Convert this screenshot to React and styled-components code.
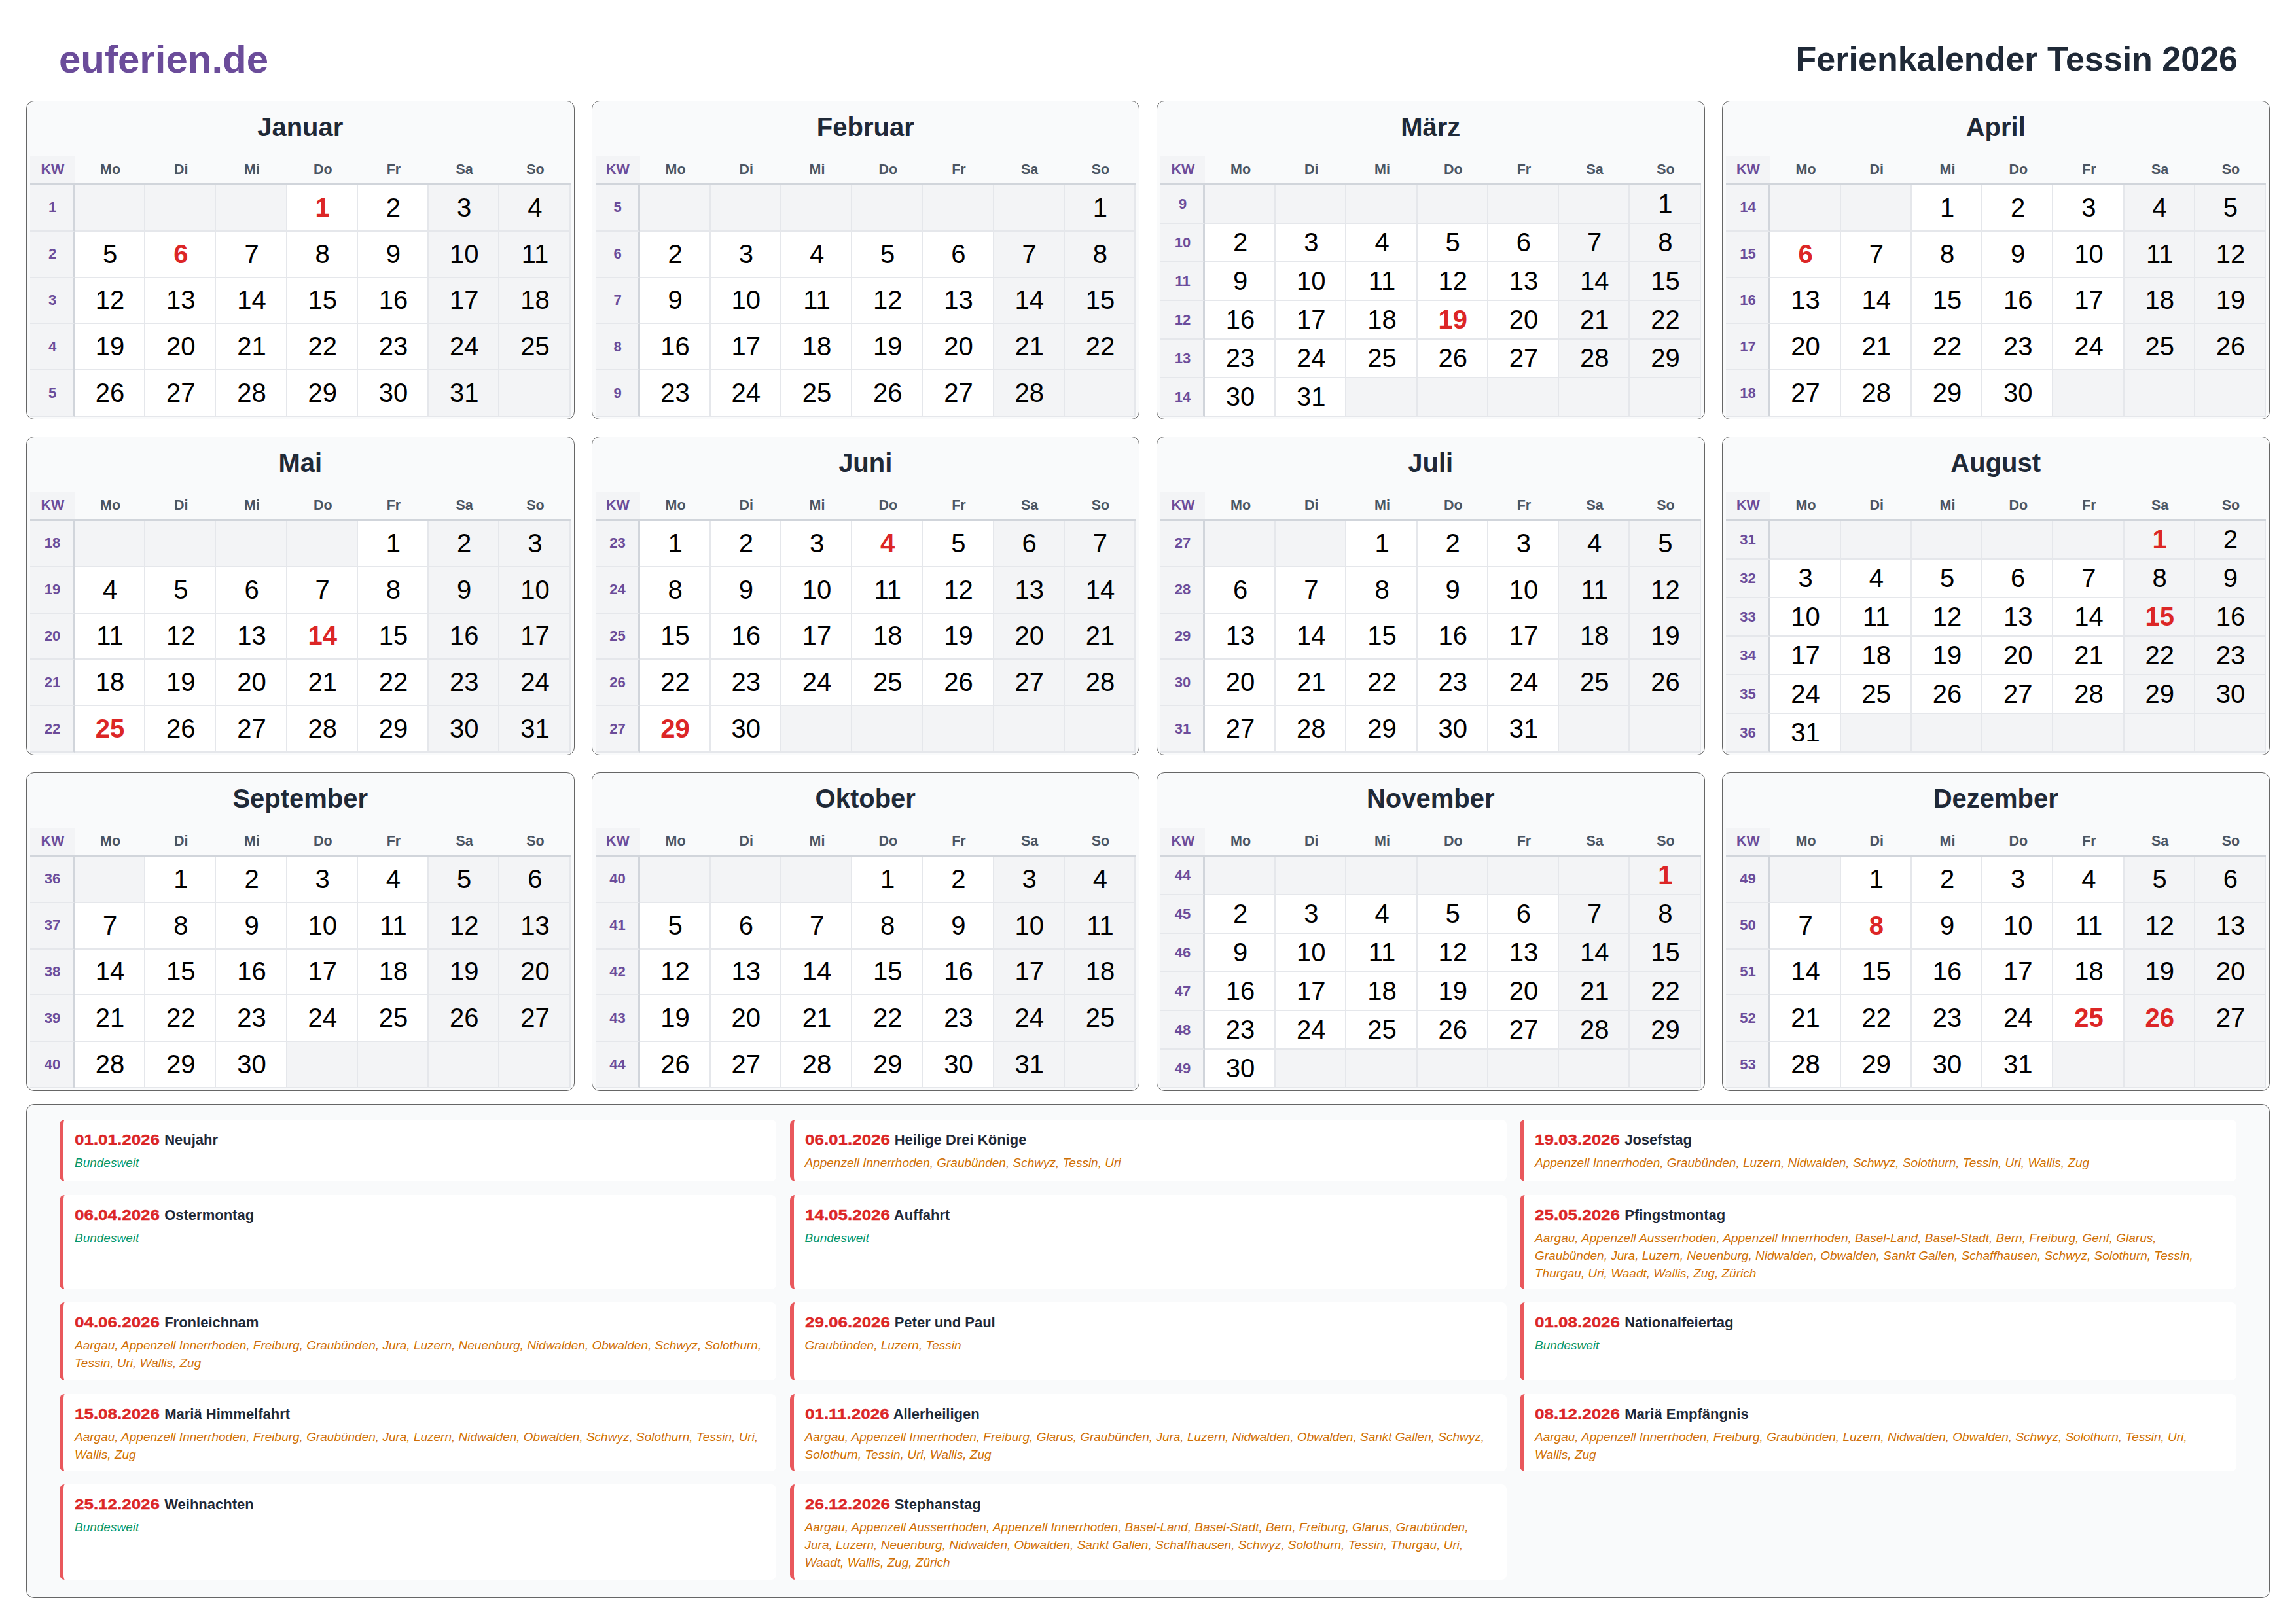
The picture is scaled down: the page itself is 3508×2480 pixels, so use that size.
import React from 'react';
import styled, { createGlobalStyle } from 'styled-components';

const GlobalStyle = createGlobalStyle`
  html, body {
    margin: 0;
    padding: 0;
    background: #fff;
    font-family: "Liberation Sans", Arial, sans-serif;
  }
`

const Page = styled.div`
  width: 3508px;
  height: 2480px;
  box-sizing: border-box;
  padding: 0 40px;
`
const Header = styled.header`
  height: 154px;
  box-sizing: border-box;
  padding: 26px 49px 0 50px;
  display: flex;
  align-items: center;
  justify-content: space-between;
`
const Brand = styled.div`
  font-size: 60px;
  font-weight: bold;
  color: #6b4c9a;
`
const PageTitle = styled.h1`
  margin: 0;
  font-size: 52px;
  font-weight: bold;
  color: #1f2937;
`
const Months = styled.div`
  display: grid;
  grid-template-columns: repeat(4, 1fr);
  grid-auto-rows: 487px;
  gap: 26px;
`
const Card = styled.section`
  box-sizing: border-box;
  border: 1px solid #666;
  border-radius: 12px;
  background: #f9fafb;
  padding: 0 5px 3px;
  display: flex;
  flex-direction: column;
`
const MonthName = styled.h2`
  margin: 0;
  height: 84px;
  line-height: 78px;
  text-align: center;
  font-size: 40px;
  font-weight: bold;
  color: #1f2937;
`
const Grid = styled.div`
  flex: 1;
  display: grid;
  grid-template-columns: 68px repeat(7, 1fr);
  grid-template-rows: 44px repeat(${p => p.$rows}, 1fr);
`
const HeadCell = styled.div`
  display: flex;
  align-items: center;
  justify-content: center;
  padding-left: 1px;
  border-bottom: 3px solid #d1d5db;
  font-size: 21.5px;
  font-weight: bold;
  color: #4b5563;
`
const KwHead = styled(HeadCell)`
  background: #f3f4f6;
  color: #6b4c9a;
`
const KwCell = styled.div`
  display: flex;
  align-items: center;
  justify-content: center;
  padding-left: 3px;
  background: #f3f4f6;
  border-right: 3px solid #d1d5db;
  border-bottom: 2px solid #e5e7eb;
  font-size: 22px;
  font-weight: bold;
  color: #6b4c9a;
`
const DayCell = styled.div`
  display: flex;
  align-items: center;
  justify-content: center;
  padding-left: 2px;
  background: ${p => (p.$muted ? '#f3f4f6' : '#fff')};
  border-right: 2px solid #e5e7eb;
  border-bottom: 2px solid #e5e7eb;
  font-size: 40px;
  font-weight: ${p => (p.$holiday ? 'bold' : 'normal')};
  color: ${p => (p.$holiday ? '#dc2626' : '#000')};
`
const Panel = styled.section`
  margin-top: 20px;
  height: 755px;
  box-sizing: border-box;
  border: 1px solid #666;
  border-radius: 12px;
  background: #f9fafb;
  padding: 23px 49px 23px 50px;
  display: grid;
  grid-template-columns: repeat(3, 1095px);
  grid-template-rows: 94px 144px 119px 118px 146px;
  gap: 20.5px;
`
const Item = styled.div`
  box-sizing: border-box;
  background: #fff;
  border-left: 6px solid #e9585c;
  border-radius: 8px;
  padding: 15px 17px;
`
const ItemTitle = styled.div`
  font-size: 22px;
  font-weight: bold;
  line-height: 32px;
  color: #1f2937;
`
const ItemDate = styled.span`
  display: inline-block;
  margin-right: 25px;
  font-size: 21.2px;
  color: #dc2626;
  transform: scaleX(1.226);
  transform-origin: left center;
  -webkit-text-stroke: 0.4px #dc2626;
`
const Regions = styled.div`
  margin-top: 5px;
  font-size: 19px;
  font-style: italic;
  line-height: 27px;
  color: ${p => (p.$all ? '#059669' : '#cf7005')};
`

const MONTHS = ['Januar', 'Februar', 'März', 'April', 'Mai', 'Juni', 'Juli', 'August', 'September', 'Oktober', 'November', 'Dezember']
const DAYS = ['Mo', 'Di', 'Mi', 'Do', 'Fr', 'Sa', 'So']

const ALL = 'Bundesweit'
const HOLIDAYS = [
  ['01.01.2026', 'Neujahr', ALL],
  ['06.01.2026', 'Heilige Drei Könige', 'Appenzell Innerrhoden, Graubünden, Schwyz, Tessin, Uri'],
  ['19.03.2026', 'Josefstag', 'Appenzell Innerrhoden, Graubünden, Luzern, Nidwalden, Schwyz, Solothurn, Tessin, Uri, Wallis, Zug'],
  ['06.04.2026', 'Ostermontag', ALL],
  ['14.05.2026', 'Auffahrt', ALL],
  ['25.05.2026', 'Pfingstmontag', 'Aargau, Appenzell Ausserrhoden, Appenzell Innerrhoden, Basel-Land, Basel-Stadt, Bern, Freiburg, Genf, Glarus, Graubünden, Jura, Luzern, Neuenburg, Nidwalden, Obwalden, Sankt Gallen, Schaffhausen, Schwyz, Solothurn, Tessin, Thurgau, Uri, Waadt, Wallis, Zug, Zürich'],
  ['04.06.2026', 'Fronleichnam', 'Aargau, Appenzell Innerrhoden, Freiburg, Graubünden, Jura, Luzern, Neuenburg, Nidwalden, Obwalden, Schwyz, Solothurn, Tessin, Uri, Wallis, Zug'],
  ['29.06.2026', 'Peter und Paul', 'Graubünden, Luzern, Tessin'],
  ['01.08.2026', 'Nationalfeiertag', ALL],
  ['15.08.2026', 'Mariä Himmelfahrt', 'Aargau, Appenzell Innerrhoden, Freiburg, Graubünden, Jura, Luzern, Nidwalden, Obwalden, Schwyz, Solothurn, Tessin, Uri, Wallis, Zug'],
  ['01.11.2026', 'Allerheiligen', 'Aargau, Appenzell Innerrhoden, Freiburg, Glarus, Graubünden, Jura, Luzern, Nidwalden, Obwalden, Sankt Gallen, Schwyz, Solothurn, Tessin, Uri, Wallis, Zug'],
  ['08.12.2026', 'Mariä Empfängnis', 'Aargau, Appenzell Innerrhoden, Freiburg, Graubünden, Luzern, Nidwalden, Obwalden, Schwyz, Solothurn, Tessin, Uri, Wallis, Zug'],
  ['25.12.2026', 'Weihnachten', ALL],
  ['26.12.2026', 'Stephanstag', 'Aargau, Appenzell Ausserrhoden, Appenzell Innerrhoden, Basel-Land, Basel-Stadt, Bern, Freiburg, Glarus, Graubünden, Jura, Luzern, Neuenburg, Nidwalden, Obwalden, Sankt Gallen, Schaffhausen, Schwyz, Solothurn, Tessin, Thurgau, Uri, Waadt, Wallis, Zug, Zürich'],
]

const isoWeek = (year, month, day) => {
  const d = new Date(Date.UTC(year, month, day))
  const wd = d.getUTCDay() || 7
  d.setUTCDate(d.getUTCDate() + 4 - wd)
  const start = Date.UTC(d.getUTCFullYear(), 0, 1)
  return Math.ceil(((d - start) / 86400000 + 1) / 7)
}

// weeks of a month as rows of seven, null where the day is in another month
const buildWeeks = (month) => {
  const count = new Date(Date.UTC(2026, month + 1, 0)).getUTCDate()
  const offset = (new Date(Date.UTC(2026, month, 1)).getUTCDay() + 6) % 7
  const cells = Array(offset).fill(null)
  for (let d = 1; d <= count; d++) cells.push(d)
  while (cells.length % 7) cells.push(null)
  const weeks = []
  for (let i = 0; i < cells.length; i += 7) weeks.push(cells.slice(i, i + 7))
  return weeks
}

const isHoliday = (month, day) => {
  const key = `${String(day).padStart(2, '0')}.${String(month + 1).padStart(2, '0')}.2026`
  return HOLIDAYS.some(h => h[0] === key)
}

const Month = ({ month }) => {
  const weeks = buildWeeks(month)
  return (
    <Card>
      <MonthName>{MONTHS[month]}</MonthName>
      <Grid $rows={weeks.length}>
        <KwHead>KW</KwHead>
        {DAYS.map(d => <HeadCell key={d}>{d}</HeadCell>)}
        {weeks.map((week, w) => {
          const first = week.find(Boolean)
          return (
            <React.Fragment key={w}>
              <KwCell>{isoWeek(2026, month, first)}</KwCell>
              {week.map((day, i) => (
                <DayCell key={i} $muted={!day || i > 4} $holiday={day && isHoliday(month, day)}>
                  {day}
                </DayCell>
              ))}
            </React.Fragment>
          )
        })}
      </Grid>
    </Card>
  )
}

export default function App() {
  return (
    <Page>
      <GlobalStyle />
      <Header>
        <Brand>euferien.de</Brand>
        <PageTitle>Ferienkalender Tessin 2026</PageTitle>
      </Header>
      <Months>
        {MONTHS.map((m, i) => <Month key={m} month={i} />)}
      </Months>
      <Panel>
        {HOLIDAYS.map(([date, name, regions]) => (
          <Item key={date}>
            <ItemTitle><ItemDate>{date}</ItemDate> {name}</ItemTitle>
            <Regions $all={regions === ALL}>{regions}</Regions>
          </Item>
        ))}
      </Panel>
    </Page>
  )
}
